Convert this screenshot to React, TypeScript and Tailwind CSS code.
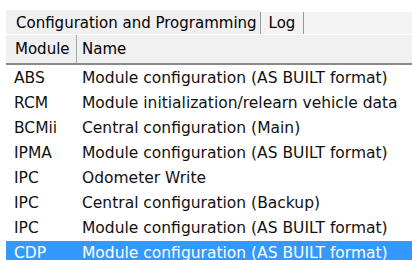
import React from "react";

type Row = { module: string; name: string; selected?: boolean };

const rows: Row[] = [
	{ module: "ABS", name: "Module configuration (AS BUILT format)" },
	{ module: "RCM", name: "Module initialization/relearn vehicle data" },
	{ module: "BCMii", name: "Central configuration (Main)" },
	{ module: "IPMA", name: "Module configuration (AS BUILT format)" },
	{ module: "IPC", name: "Odometer Write" },
	{ module: "IPC", name: "Central configuration (Backup)" },
	{ module: "IPC", name: "Module configuration (AS BUILT format)" },
	{ module: "CDP", name: "Module configuration (AS BUILT format)", selected: true },
];

export default function App() {
	return (
		<div className="w-[412px] h-[260px] overflow-hidden bg-white pl-[6px] pt-[10px] font-['DejaVu_Sans',sans-serif] text-[15.5px] text-[#111]">
			{/* Tab strip */}
			<div className="flex h-[24px] items-end">
				<div className="h-[24px] w-[254px] bg-[#f0f0f0] pl-[10px] text-[15px] leading-[26px] text-black">
					Configuration and Programming
				</div>
				<div className="h-[22px] w-[44px] border-x border-[#9a9a9a] bg-[#f3f3f3] text-center text-[15px] leading-[23px] text-black">
					Log
				</div>
				<div className="h-[22px] flex-1 bg-[#f3f3f3]" />
			</div>

			{/* Column header */}
			<div className="flex h-[31px] border-t border-white border-b-2 border-b-[#8a8a8a] bg-[#f0f0f0] text-[15px] text-black">
				<div className="w-[71px] border-r border-[#a8a8a8] pl-[9px] leading-[29px]">Module</div>
				<div className="pl-[5px] leading-[29px]">Name</div>
			</div>

			{/* Rows */}
			<div className="pt-[1px]">
				{rows.map((r, i) => (
					<div
						key={i}
						className={
							r.selected
								? "flex h-[25px] items-center bg-[#3399ff] text-white"
								: "flex h-[25px] items-center"
						}
					>
						<div className="w-[72px] pl-[8px]">{r.module}</div>
						<div className="whitespace-nowrap pl-[4px]">{r.name}</div>
					</div>
				))}
			</div>
		</div>
	);
}
